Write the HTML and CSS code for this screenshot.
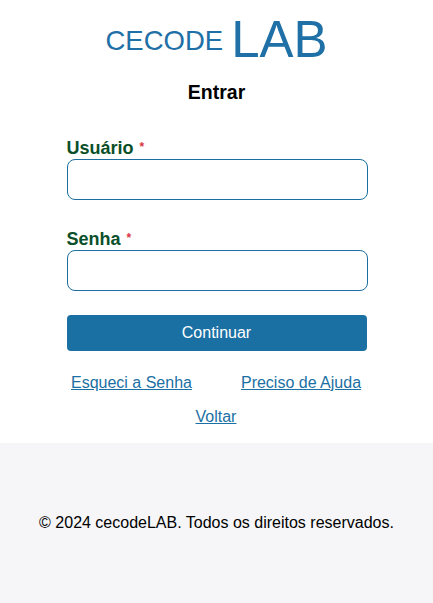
FILE: index.html
```html
<!DOCTYPE html>
<html lang="pt-BR">
<head>
<meta charset="utf-8">
<title>Entrar - cecodeLAB</title>
<link rel="stylesheet" href="styles.css">
</head>
<body>
<main class="main">
  <header class="logo">
    <span class="logo-small">CECODE</span>
    <span class="logo-big">LAB</span>
  </header>
  <h1 class="title">Entrar</h1>
  <form class="form">
    <div class="field">
      <label class="label" for="user">Usuário <span class="req">*</span></label>
      <input class="input" id="user" type="text">
    </div>
    <div class="field">
      <label class="label" for="pass">Senha <span class="req">*</span></label>
      <input class="input" id="pass" type="password">
    </div>
    <button class="btn" type="button">Continuar</button>
    <div class="links">
      <a class="link" href="#">Esqueci a Senha</a>
      <a class="link" href="#">Preciso de Ajuda</a>
    </div>
    <div class="back">
      <a class="link" href="#">Voltar</a>
    </div>
  </form>
</main>
<footer class="footer">
  <p class="copy">© 2024 cecodeLAB. Todos os direitos reservados.</p>
</footer>
</body>
</html>
```
FILE: styles.css
```css
* { box-sizing: border-box; }
html, body { margin: 0; padding: 0; }
body {
  font-family: "Liberation Sans", Arial, sans-serif;
  color: #000;
  background: #fff;
}
.main {
  padding-top: 11px;
  padding-bottom: 17px;
}
.logo {
  display: flex;
  justify-content: center;
  align-items: center;
  gap: 8px;
  color: #1f70a6;
  height: 56px;
}
.logo-small {
  font-size: 27.5px;
  padding-top: 4px;
}
.logo-big {
  font-size: 51px;
}
.title {
  margin: 14px 0 0;
  text-align: center;
  font-size: 19.5px;
  font-weight: bold;
}
.form {
  width: 302px;
  margin: 34px auto 0;
  padding-left: 1px;
}
.field {
  display: flex;
  flex-direction: column;
  margin-bottom: 29px;
}
.field + .field { margin-bottom: 24px; }
.label {
  display: block;
  font-size: 18px;
  line-height: 21px;
  font-weight: bold;
  color: #0a4f2a;
}
.req {
  color: #dc3545;
  font-size: 12px;
  line-height: 0;
  vertical-align: 3px;
  margin-left: 1px;
}
.input {
  width: 301px;
  height: 41px;
  border: 1px solid #1a6fa0;
  border-radius: 8px;
  background: #fff;
  font-size: 16px;
  padding: 0 10px;
}
.btn {
  display: block;
  width: 300px;
  height: 36px;
  border: none;
  border-radius: 4px;
  background: #1b70a3;
  color: #fff;
  font-family: inherit;
  font-size: 16px;
  padding: 0;
}
.links {
  display: flex;
  justify-content: center;
  gap: 49px;
  margin-top: 23px;
  padding-right: 2px;
}
.back {
  text-align: center;
  margin-top: 16px;
  padding-right: 2px;
}
.link {
  color: #1b70a3;
  font-size: 16px;
  text-decoration: underline;
  line-height: 18px;
}
.footer {
  background: #f6f6f8;
  height: 161px;
  display: flex;
  align-items: center;
  justify-content: center;
}
.copy {
  margin: 0;
  font-size: 16px;
  padding-bottom: 2px;
}
```
